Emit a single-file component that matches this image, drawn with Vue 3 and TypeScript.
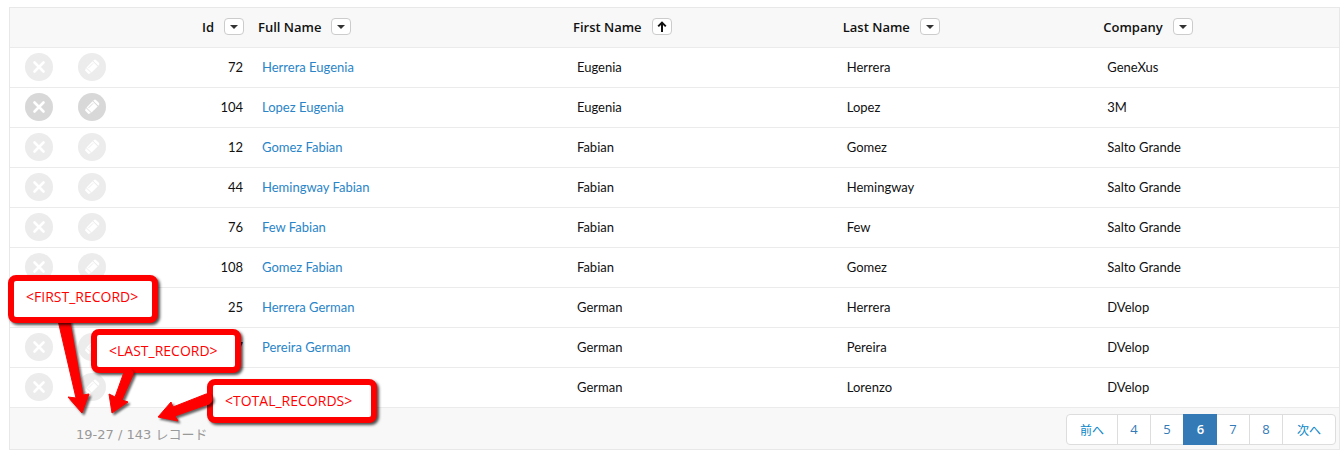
<script setup lang="ts">
import { ref } from 'vue'

interface Column {
  key: string
  label: string
  sorted?: boolean
}

interface Person {
  id: string
  full: string
  first: string
  last: string
  company: string
}

const columns: Column[] = [
  { key: 'id', label: 'Id' },
  { key: 'full', label: 'Full Name' },
  { key: 'first', label: 'First Name', sorted: true },
  { key: 'last', label: 'Last Name' },
  { key: 'company', label: 'Company' },
]

const people: Person[] = [
  { id: '72', full: 'Herrera Eugenia', first: 'Eugenia', last: 'Herrera', company: 'GeneXus' },
  { id: '104', full: 'Lopez Eugenia', first: 'Eugenia', last: 'Lopez', company: '3M' },
  { id: '12', full: 'Gomez Fabian', first: 'Fabian', last: 'Gomez', company: 'Salto Grande' },
  { id: '44', full: 'Hemingway Fabian', first: 'Fabian', last: 'Hemingway', company: 'Salto Grande' },
  { id: '76', full: 'Few Fabian', first: 'Fabian', last: 'Few', company: 'Salto Grande' },
  { id: '108', full: 'Gomez Fabian', first: 'Fabian', last: 'Gomez', company: 'Salto Grande' },
  { id: '25', full: 'Herrera German', first: 'German', last: 'Herrera', company: 'DVelop' },
  { id: '57', full: 'Pereira German', first: 'German', last: 'Pereira', company: 'DVelop' },
  { id: '', full: '', first: 'German', last: 'Lorenzo', company: 'DVelop' },
]

const highlighted = ref(1)
const pages = [4, 5, 6, 7, 8]
const current = ref(6)
</script>

<template>
  <main class="page">
    <div class="grid">
      <table>
        <colgroup>
          <col class="c-action" />
          <col class="c-action" />
          <col class="c-id" />
          <col class="c-full" />
          <col class="c-first" />
          <col class="c-last" />
          <col />
        </colgroup>
        <thead>
          <tr>
            <td colspan="2"></td>
            <th v-for="col in columns" :key="col.key" scope="col" :class="{ num: col.key === 'id' }">
              <div class="head">
                <span>{{ col.label }}</span>
                <button type="button" class="sort" :aria-label="`Options for ${col.label}`">
                  <svg v-if="col.sorted" width="10" height="11" viewBox="0 0 10 11">
                    <path d="M5 11V2M1.2 5.4L5 1.6l3.8 3.8" fill="none" stroke="#111" stroke-width="2" />
                  </svg>
                  <svg v-else width="8" height="4" viewBox="0 0 8 4">
                    <path d="M0 0h8L4 4z" fill="#333" />
                  </svg>
                </button>
              </div>
            </th>
          </tr>
        </thead>
        <tbody>
          <tr v-for="(p, i) in people" :key="i" :class="{ active: i === highlighted }" @mouseenter="highlighted = i">
            <td class="action">
              <button type="button" class="round" aria-label="Delete">
                <svg width="28" height="28" viewBox="0 0 28 28">
                  <path d="M9.5 9.5l9 9M18.5 9.5l-9 9" stroke="#fff" stroke-width="2.6" stroke-linecap="round" />
                </svg>
              </button>
            </td>
            <td class="action">
              <button type="button" class="round" aria-label="Edit">
                <svg width="28" height="28" viewBox="0 0 28 28">
                  <g transform="rotate(45 14 14)">
                    <path d="M10.4 8.6V8q0-1.8 1.8-1.8h3.6q1.8 0 1.8 1.8v.6z" fill="#fff" />
                    <path d="M10.4 9.6h7.2v8.6h-7.2z" fill="#fff" />
                    <path d="M10.4 19h7.2L16.4 21.4h-4.8z" fill="#fff" />
                    <path class="groove" d="M12.2 10.6v6.4" stroke-width=".9" />
                  </g>
                </svg>
              </button>
            </td>
            <td class="num">{{ p.id }}</td>
            <td><a v-if="p.full" href="#">{{ p.full }}</a></td>
            <td>{{ p.first }}</td>
            <td>{{ p.last }}</td>
            <td>{{ p.company }}</td>
          </tr>
        </tbody>
      </table>
      <footer class="foot">
        <p class="count">19-27 / 143 <span class="unit">レコード</span></p>
        <nav class="pager" aria-label="Pages">
          <a href="#" class="step prev">前へ</a>
          <a
            v-for="n in pages"
            :key="n"
            href="#"
            :class="{ current: n === current }"
            @click.prevent="current = n"
          >{{ n }}</a>
          <a href="#" class="step next">次へ</a>
        </nav>
      </footer>
    </div>

    <svg class="arrows" width="240" height="440" viewBox="0 0 240 440" aria-hidden="true">
      <path d="M57 316L69 316L83 395L89 394L82 413L68 397L76 398Z" fill="#f00" stroke="#f00" stroke-linejoin="round" />
    </svg>
    <div class="note first">&lt;FIRST_RECORD&gt;</div>
    <div class="note last">&lt;LAST_RECORD&gt;</div>
    <div class="note total">&lt;TOTAL_RECORDS&gt;</div>
    <svg class="arrows" width="240" height="440" viewBox="0 0 240 440" aria-hidden="true">
      <g fill="#f00" stroke="#f00" stroke-linejoin="round">
        <path d="M124 372Q126 369 129 369Q134 370 133 375L122 400L128 402L112 413L109 394L115 397Z" />
        <path d="M206 394Q211 393 212 397Q213 402 209 404L175 416L178 421L158 417L171 402L173 407Z" />
      </g>
    </svg>
  </main>
</template>

<style>
body {
  margin: 0;
  background: #fff;
}
</style>

<style scoped>
.page {
  position: relative;
  padding: 7px 4px 8px 9px;
  font-family: "Open Sans", "Noto Sans CJK JP", sans-serif;
  font-size: 13px;
  line-height: 20px;
  color: #111;
}
.grid {
  border: 1px solid #e8e8e8;
}
table {
  width: 100%;
  table-layout: fixed;
  border-collapse: separate;
  border-spacing: 0;
}
tbody { font-family: Lato, sans-serif; }
.c-action { width: 53px; }
.c-id { width: 134px; }
.c-full { width: 23.7%; }
.c-first { width: 20.3%; }
.c-last { width: 19.6%; }
thead { background: #f8f8f8; }
th,
td {
  box-sizing: border-box;
  height: 40px;
  padding: 0 0 2px 12px;
  border-bottom: 1px solid #ebebeb;
  text-align: left;
  white-space: nowrap;
}
th {
  padding-left: 8px;
  font-weight: 600;
}
.head {
  display: flex;
  align-items: center;
  gap: 10px;
}
th.num { padding-right: 6px; }
th.num .head { justify-content: flex-end; }
td.num {
  padding-right: 7px;
  text-align: right;
}
.sort {
  display: flex;
  align-items: center;
  justify-content: center;
  box-sizing: border-box;
  width: 20px;
  height: 17px;
  padding: 0;
  border: 1px solid #ccc;
  border-radius: 4px;
  background: #fff;
}
td.action { padding-left: 15px; }
.round {
  display: block;
  width: 28px;
  height: 28px;
  padding: 0;
  border: 0;
  border-radius: 50%;
  background: #ececec;
}
.round svg { display: block; }
.groove { stroke: #ececec; }
.active .round { background: #d8d8d8; }
.active .groove { stroke: #d8d8d8; }
a {
  color: #2a85c8;
  text-decoration: none;
}
.foot {
  display: flex;
  align-items: center;
  justify-content: space-between;
  padding: 6px 3px 4px 66px;
  background: #f8f8f8;
}
.count {
  margin: 10px 0 0;
  font-family: "DejaVu Sans", "Noto Sans CJK JP", sans-serif;
  color: #999;
}
.pager {
  display: flex;
  border: 1px solid #ddd;
  border-radius: 4px;
  background: #fff;
}
.pager a {
  box-sizing: border-box;
  width: 33px;
  height: 29px;
  line-height: 29px;
  border-left: 1px solid #ddd;
  text-align: center;
  color: #337ab7;
}
.pager .step {
  font-size: 12px;
  line-height: 31px;
  color: #0a86c8;
}
.pager .prev {
  width: 50px;
  border-left: 0;
}
.pager .next { width: 53px; }
.pager .current {
  width: 34px;
  height: 31px;
  margin: -1px -1px -1px 0;
  line-height: 31px;
  border-color: #337ab7;
  background: #337ab7;
  color: #fff;
  font-weight: 600;
}
.pager .current + a { border-left-color: transparent; }
.arrows {
  position: absolute;
  top: 0;
  left: 0;
  pointer-events: none;
  filter: drop-shadow(2px 2px 1px rgba(0, 0, 0, 0.6));
}
.note {
  position: absolute;
  box-sizing: border-box;
  padding: 6px 12px;
  border: 6px solid #f00;
  border-radius: 8px;
  background: #fff;
  box-shadow: 2px 2px 3px rgba(0, 0, 0, 0.7);
  font-family: "Open Sans", sans-serif;
  font-size: 14px;
  line-height: 20px;
  color: #f00;
}
.first {
  top: 275px;
  left: 8px;
  width: 150px;
  padding-bottom: 10px;
}
.last {
  top: 329px;
  left: 91px;
  width: 150px;
}
.total {
  top: 379px;
  left: 207px;
  width: 170px;
}
</style>
